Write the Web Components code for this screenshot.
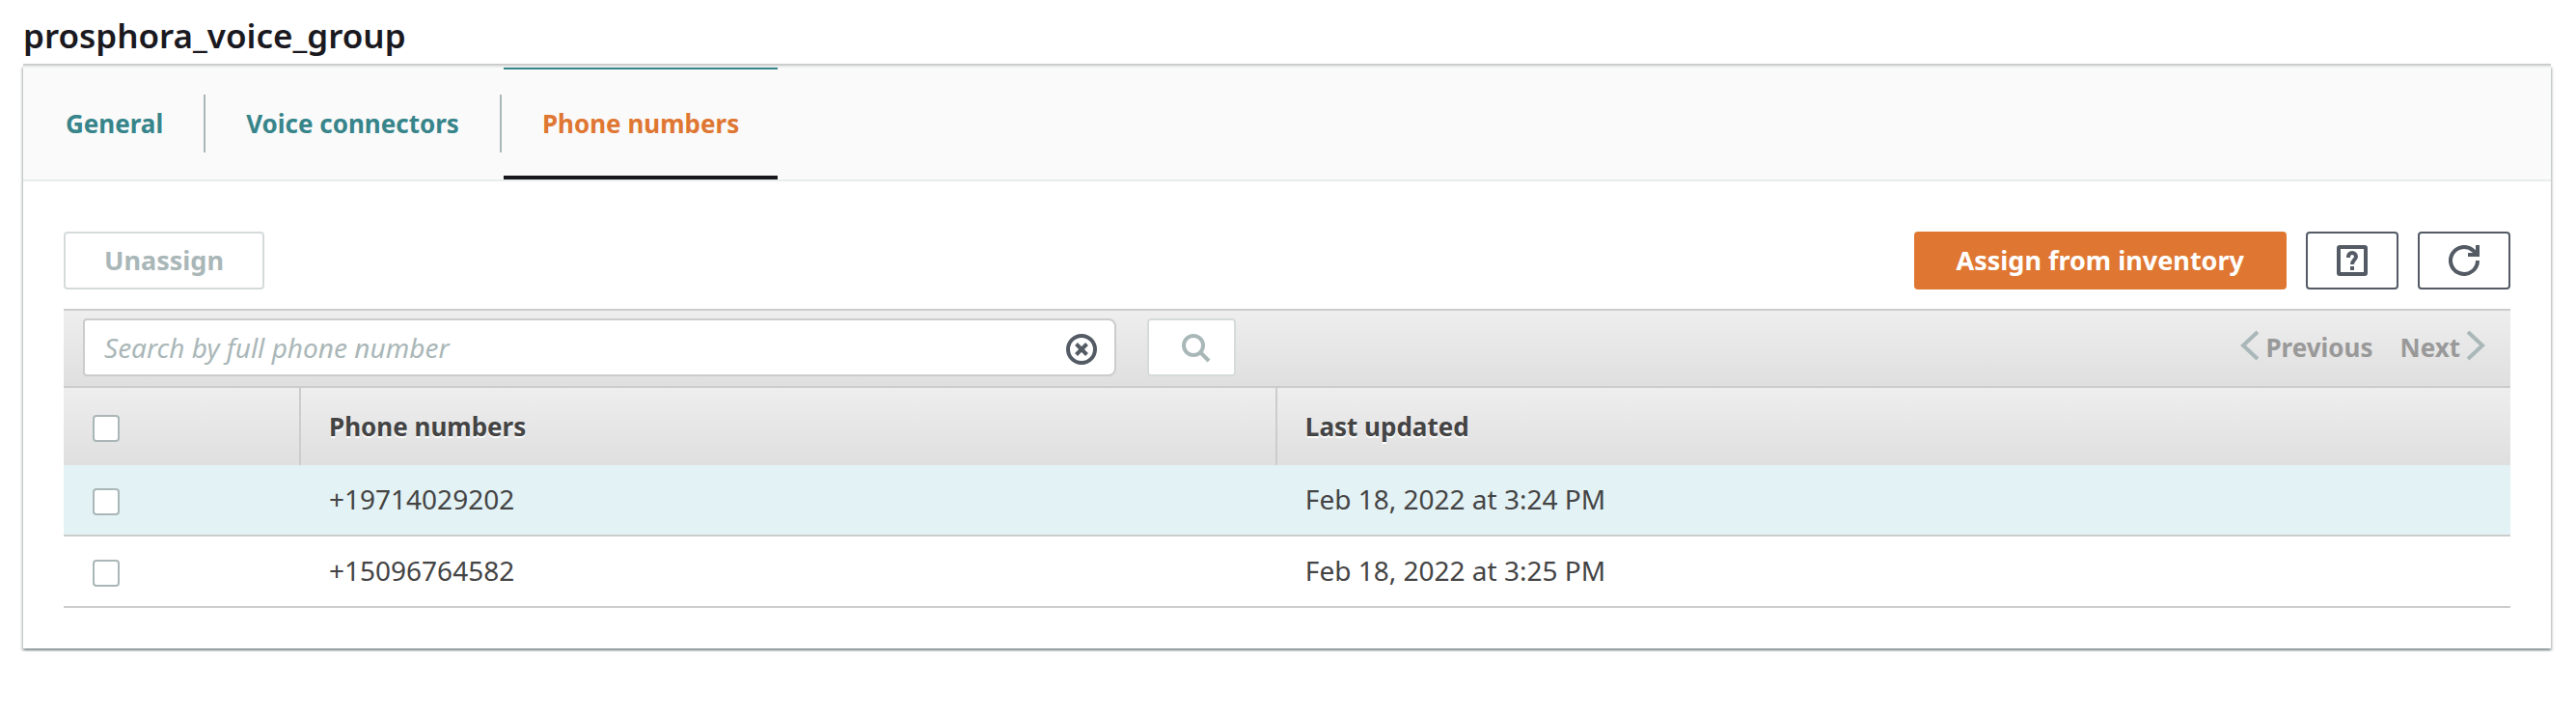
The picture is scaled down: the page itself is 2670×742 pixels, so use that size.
<!DOCTYPE html>
<html lang="en">
<head>
<meta charset="utf-8">
<title>prosphora_voice_group</title>
<style>
  body {
    margin: 0;
    background: #fff;
    color: #444;
    font-family: "Noto Sans", "Open Sans", sans-serif;
    font-size: 28px;
    line-height: 38px;
  }
</style>
</head>
<body>
<voice-group-page></voice-group-page>

<template id="voice-group-page">
  <style>
    :host { display: block; padding: 0 26px 70px 24px; }
    h1 {
      margin: 0;
      padding: 14px 0 6px;
      border-bottom: 2px solid #ccc;
      color: #1a191f;
      font-size: 35px;
      line-height: 46px;
      font-weight: 600;
    }
  </style>
  <h1>prosphora_voice_group</h1>
  <panel-card>
    <tab-bar slot="tabs">
      <tab-link href="#general">General</tab-link>
      <tab-link href="#connectors">Voice connectors</tab-link>
      <tab-link href="#numbers" current>Phone numbers</tab-link>
    </tab-bar>
    <action-bar></action-bar>
    <search-bar></search-bar>
    <numbers-table></numbers-table>
  </panel-card>
</template>

<template id="panel-card">
  <style>
    :host {
      display: block;
      border-top: 2px solid #eaeded;
      background: #fff;
      box-shadow: 0 2px 2px 0 rgba(0, 28, 36, .3), 2px 2px 2px 0 rgba(0, 28, 36, .15), -2px 2px 2px 0 rgba(0, 28, 36, .15);
    }
    .body { padding: 52px 42px 42px; }
  </style>
  <slot name="tabs"></slot>
  <div class="body"><slot></slot></div>
</template>

<template id="tab-bar">
  <style>
    :host { display: block; background: #fafafa; border-bottom: 2px solid #eaeded; }
    nav { display: flex; padding-left: 2px; }
  </style>
  <nav aria-label="Voice connector group"><slot></slot></nav>
</template>

<template id="tab-link">
  <style>
    :host { display: flex; align-items: center; }
    :host(:not(:last-child))::after { content: ""; width: 2px; height: 60px; background: #aab7b8; }
    a {
      margin: 0 2px;
      padding: 40px;
      color: #37858a;
      font-size: 26px;
      line-height: 36px;
      font-weight: 700;
      text-decoration: none;
    }
    :host([current]) a {
      color: #df7732;
      box-shadow: inset 0 2px #37858a, inset 0 -4px #1a191f;
    }
  </style>
  <a><slot></slot></a>
</template>

<template id="action-bar">
  <style>
    :host { display: flex; gap: 20px; margin-bottom: 20px; }
    button {
      box-sizing: border-box;
      height: 60px;
      margin: 0;
      padding: 0 40px;
      border: 2px solid #545b64;
      border-radius: 4px;
      background: #fff;
      color: #545b64;
      font: 700 27px/36px "Noto Sans", "Open Sans", sans-serif;
    }
    .primary { margin-left: auto; padding: 0 42px; border-color: #df7732; background: #df7732; color: #fff; }
    .icon { width: 96px; padding: 0 30px; }
    button:disabled { border-color: #d5dbdb; color: #aab7b8; }
    svg { display: block; width: 32px; height: 32px; fill: none; stroke: currentColor; stroke-width: 4; }
  </style>
  <button type="button" disabled>Unassign</button>
  <button type="button" class="primary">Assign from inventory</button>
  <button type="button" class="icon" aria-label="Help">
    <svg viewBox="0 0 32 32" aria-hidden="true">
      <rect x="2" y="2" width="28" height="28" rx="1"/>
      <path d="M12 13v-1a4 4 0 0 1 8 0c0 3-4 3.500-4 8"/>
      <path d="M16 22v4"/>
    </svg>
  </button>
  <button type="button" class="icon" aria-label="Refresh">
    <svg viewBox="0 0 32 32" aria-hidden="true">
      <path d="M30 16A14 14 0 1 1 25.500 5.700L29 9.500"/>
      <path d="M20 10h10V0"/>
    </svg>
  </button>
</template>

<template id="search-bar">
  <style>
    :host {
      display: flex;
      align-items: center;
      padding: 8px 26px 10px 20px;
      border: solid #ccc;
      border-width: 2px 0;
      background: linear-gradient(#eee, #dfdfdf);
    }
    .field { position: relative; width: 43%; margin-right: 32px; }
    input {
      display: block;
      box-sizing: border-box;
      width: 100%;
      height: 60px;
      margin: 0;
      padding: 0 64px 0 20px;
      border: 2px solid #ccc;
      border-radius: 4px 8px 8px 4px;
      background: #fff;
      color: #444;
      font: 28px/38px "Noto Sans", "Open Sans", sans-serif;
    }
    input::placeholder { color: #aab7b8; font-style: italic; opacity: 1; }
    button { margin: 0; border: 0; background: none; }
    .clear { position: absolute; top: 16px; right: 20px; padding: 0; color: #545b64; }
    .go {
      box-sizing: border-box;
      width: 92px;
      height: 60px;
      padding: 4px 22px 0 34px;
      border: 2px solid #d5dbdb;
      border-radius: 4px;
      background: #fff;
      color: #aab7b8;
    }
    svg { display: block; width: 32px; height: 32px; fill: none; stroke: currentColor; stroke-width: 4; }
    pager-nav { margin-left: auto; }
  </style>
  <div class="field">
    <input type="text" placeholder="Search by full phone number" aria-label="Search by full phone number">
    <button type="button" class="clear" aria-label="Clear search">
      <svg viewBox="0 0 32 32" aria-hidden="true">
        <circle cx="16" cy="16" r="14"/>
        <path d="M10.500 10.500l11 11M21.500 10.500l-11 11"/>
      </svg>
    </button>
  </div>
  <button type="button" class="go" aria-label="Search" disabled>
    <svg viewBox="0 0 32 32" aria-hidden="true">
      <circle cx="12" cy="12" r="10"/>
      <path d="M19 19l9 9"/>
    </svg>
  </button>
  <pager-nav></pager-nav>
</template>

<template id="pager-nav">
  <style>
    :host { display: flex; gap: 28px; }
    button {
      display: flex;
      align-items: flex-start;
      gap: 6px;
      margin: 0;
      padding: 0;
      border: 0;
      background: none;
      color: #999;
      font: 700 26px/36px "Noto Sans", "Open Sans", sans-serif;
    }
    svg { width: 20px; height: 32px; fill: none; stroke: #aab7b8; stroke-width: 4; }
  </style>
  <button type="button" disabled>
    <svg viewBox="0 0 20 32" aria-hidden="true"><path d="M18 2L3 16l15 14"/></svg>Previous
  </button>
  <button type="button" disabled>
    Next<svg viewBox="0 0 20 32" aria-hidden="true"><path d="M2 2l15 14L2 30"/></svg>
  </button>
</template>

<template id="numbers-table">
  <style>
    :host { display: block; }
    table { width: 100%; table-layout: fixed; border-collapse: separate; border-spacing: 0; }
    .pick { width: 246px; }
    .number { width: 39.9%; }
    thead { background: linear-gradient(#eee, #dfdfdf); }
    th, td { box-sizing: border-box; padding: 0 29px; text-align: left; vertical-align: middle; }
    th {
      height: 80px;
      border-right: 2px solid #ccc;
      font-size: 26px;
      line-height: 36px;
      font-weight: 700;
      text-shadow: 0 2px #fff;
    }
    th:last-child { border-right: 0; }
    td { height: 74px; padding-bottom: 2px; border-bottom: 2px solid #ccc; }
    tbody tr:first-child { background: #e3f2f5; }
    th:first-child, td:first-child { padding: 4px 30px 0; }
    input {
      display: block;
      appearance: none;
      box-sizing: border-box;
      width: 28px;
      height: 28px;
      margin: 0;
      border: 2px solid #aab7b8;
      border-radius: 4px;
      background: #fff;
    }
    input:checked { background: #37858a; }
  </style>
  <table>
    <colgroup><col class="pick"><col class="number"><col></colgroup>
    <thead>
      <tr>
        <th><input type="checkbox" aria-label="Select all phone numbers"></th>
        <th scope="col">Phone numbers</th>
        <th scope="col">Last updated</th>
      </tr>
    </thead>
    <tbody>
      <tr>
        <td><input type="checkbox" aria-label="Select +19714029202"></td>
        <td>+19714029202</td>
        <td>Feb 18, 2022 at 3:24 PM</td>
      </tr>
      <tr>
        <td><input type="checkbox" aria-label="Select +15096764582"></td>
        <td>+15096764582</td>
        <td>Feb 18, 2022 at 3:25 PM</td>
      </tr>
    </tbody>
  </table>
</template>

<script>
  class TemplateElement extends HTMLElement {
    constructor() {
      super();
      const template = document.getElementById(this.localName);
      this.attachShadow({ mode: "open" }).append(template.content.cloneNode(true));
    }
  }

  class TabLink extends TemplateElement {
    connectedCallback() {
      const link = this.shadowRoot.querySelector("a");
      link.href = this.getAttribute("href");
      if (this.hasAttribute("current")) link.setAttribute("aria-current", "page");
    }
  }

  customElements.define("tab-link", TabLink);
  for (const name of ["pager-nav", "numbers-table", "search-bar", "action-bar", "tab-bar", "panel-card", "voice-group-page"]) {
    customElements.define(name, class extends TemplateElement {});
  }
</script>
</body>
</html>
